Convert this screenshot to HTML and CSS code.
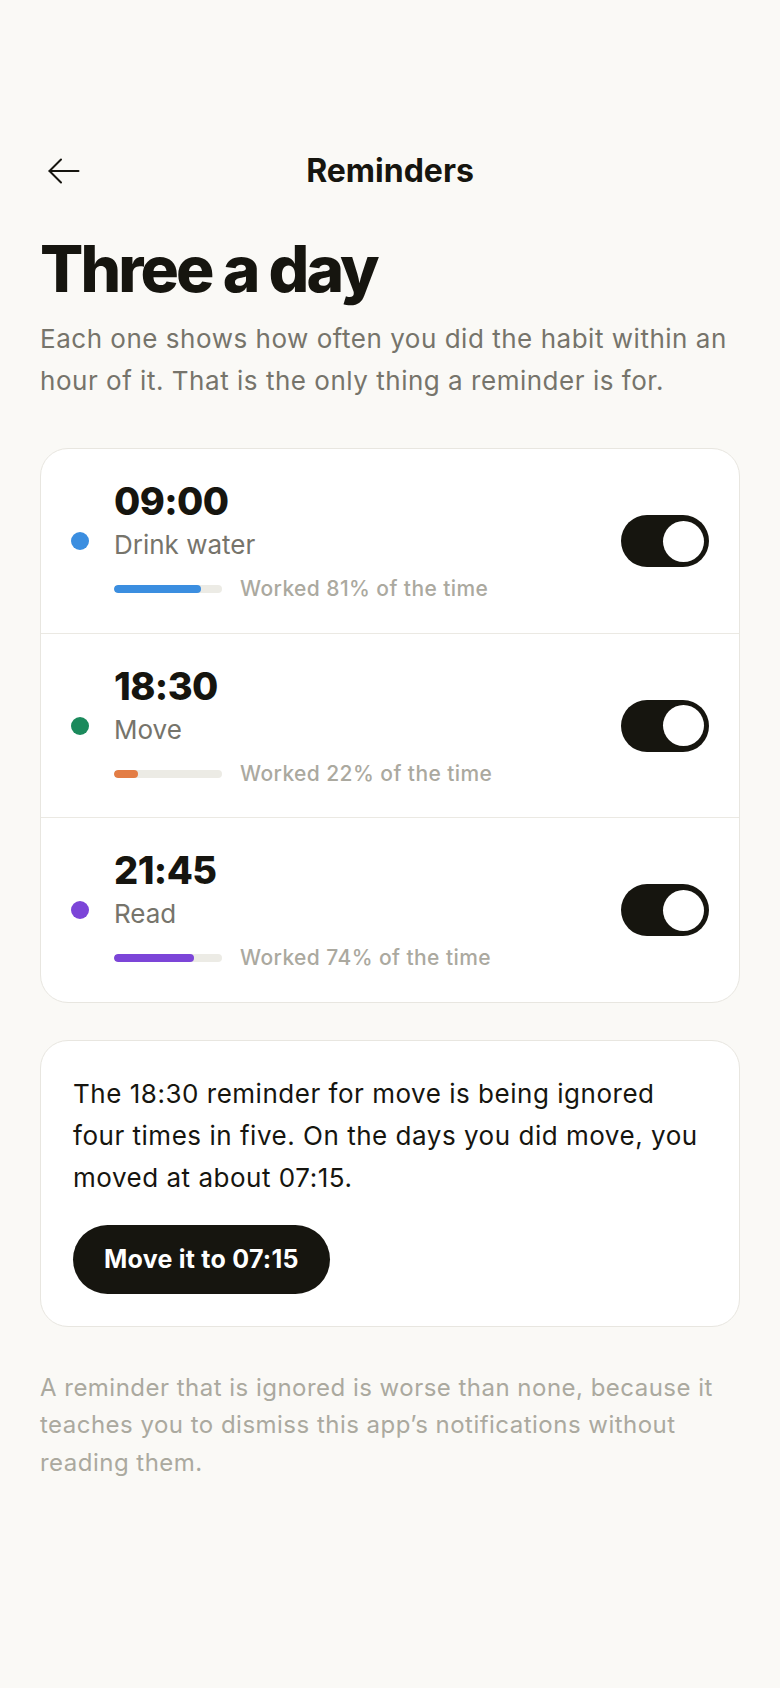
FILE: index.html
```html
<!DOCTYPE html>
<html lang="en">
<head>
<meta charset="utf-8">
<meta name="viewport" content="width=device-width, initial-scale=1">
<title>Reminders</title>
<link rel="stylesheet" href="styles.css">
</head>
<body>
<div class="screen">
  <header class="topbar">
    <button class="back" aria-label="Back">
      <svg width="32" height="26" viewBox="0 0 32 26" fill="none" stroke="currentColor" stroke-width="2" stroke-linecap="round" stroke-linejoin="round">
        <path d="M30.5 13H1.5"/>
        <path d="M13 1.5L1.5 13L13 24.5"/>
      </svg>
    </button>
    <h1 class="topbar-title">Reminders</h1>
    <span class="topbar-spacer"></span>
  </header>

  <h2 class="headline">Three a day</h2>
  <p class="lede">Each one shows how often you did the habit within an hour of it. That is the only thing a reminder is for.</p>

  <section class="card reminder-list">
    <div class="reminder">
      <span class="dot dot-blue"></span>
      <div class="reminder-body">
        <div class="time">09:00</div>
        <div class="habit">Drink water</div>
        <div class="stat">
          <span class="track"><span class="fill fill-blue" style="width:81%"></span></span>
          <span class="stat-text">Worked 81% of the time</span>
        </div>
      </div>
      <span class="toggle on"><span class="knob"></span></span>
    </div>
    <div class="reminder">
      <span class="dot dot-green"></span>
      <div class="reminder-body">
        <div class="time">18:30</div>
        <div class="habit">Move</div>
        <div class="stat">
          <span class="track"><span class="fill fill-orange" style="width:22%"></span></span>
          <span class="stat-text">Worked 22% of the time</span>
        </div>
      </div>
      <span class="toggle on"><span class="knob"></span></span>
    </div>
    <div class="reminder">
      <span class="dot dot-purple"></span>
      <div class="reminder-body">
        <div class="time">21:45</div>
        <div class="habit">Read</div>
        <div class="stat">
          <span class="track"><span class="fill fill-purple" style="width:74%"></span></span>
          <span class="stat-text">Worked 74% of the time</span>
        </div>
      </div>
      <span class="toggle on"><span class="knob"></span></span>
    </div>
  </section>

  <section class="card tip">
    <p class="tip-text">The 18:30 reminder for move is being ignored four times in five. On the days you did move, you moved at about 07:15.</p>
    <button class="tip-button">Move it to 07:15</button>
  </section>

  <p class="footnote">A reminder that is ignored is worse than none, because it teaches you to dismiss this app’s notifications without reading them.</p>
</div>
</body>
</html>
```
FILE: styles.css
```css
* { box-sizing: border-box; }

html, body {
  margin: 0;
  padding: 0;
  background: #faf9f6;
}

body {
  font-family: "Inter", "Noto Sans", "Liberation Sans", sans-serif;
  color: #16150f;
}

.screen {
  padding: 147px 40px 40px;
  display: flex;
  flex-direction: column;
}

.topbar {
  display: grid;
  grid-template-columns: 1fr auto 1fr;
  align-items: center;
  height: 48px;
}

.back {
  justify-self: start;
  width: 48px;
  height: 48px;
  padding: 0;
  border: 0;
  background: none;
  color: #16150f;
  display: flex;
  align-items: center;
  justify-content: center;
}

.back svg { display: block; }

.topbar-title {
  margin: 0;
  font-size: 32px;
  line-height: 48px;
  font-weight: 700;
  letter-spacing: 0;
}

.headline {
  margin: 39px 0 0;
  font-size: 64px;
  line-height: 70px;
  font-weight: 800;
  letter-spacing: -0.045em;
}

.lede {
  margin: 14px 0 0;
  font-size: 26px;
  line-height: 42px;
  color: #76746b;
  letter-spacing: 0.02em;
}

.card {
  background: #ffffff;
  border: 1px solid #e8e6e0;
  border-radius: 28px;
}

.reminder-list {
  margin-top: 46px;
  overflow: hidden;
}

.reminder {
  display: flex;
  align-items: center;
  padding: 30px 30px 29.5px;
}

.reminder + .reminder {
  border-top: 1px solid #ebe9e3;
}

.dot {
  width: 18px;
  height: 18px;
  border-radius: 50%;
  flex: none;
  margin-right: 25px;
}

.dot-blue { background: #3b8ee0; }
.dot-green { background: #1b8a5c; }
.dot-purple { background: #7c45d8; }

.reminder-body {
  flex: 1;
  min-width: 0;
}

.time {
  font-size: 38px;
  line-height: 44px;
  font-weight: 800;
  letter-spacing: -0.015em;
}

.habit {
  margin-top: 4px;
  font-size: 26px;
  line-height: 36px;
  color: #76746b;
}

.stat {
  margin-top: 12px;
  display: flex;
  align-items: center;
  gap: 18px;
  height: 28px;
}

.track {
  width: 108px;
  height: 8px;
  border-radius: 4px;
  background: #ecebe5;
  flex: none;
  overflow: hidden;
}

.fill {
  display: block;
  height: 100%;
  border-radius: 4px;
}

.fill-blue { background: #3b8ee0; }
.fill-orange { background: #e37d45; }
.fill-purple { background: #7c45d8; }

.stat-text {
  font-size: 21px;
  line-height: 28px;
  font-weight: 500;
  color: #aba99f;
  letter-spacing: 0.02em;
}

.toggle {
  flex: none;
  width: 88px;
  height: 52px;
  border-radius: 26px;
  background: #16150f;
  display: flex;
  align-items: center;
  justify-content: flex-end;
  padding: 0 5px;
}

.knob {
  width: 41px;
  height: 41px;
  border-radius: 50%;
  background: #ffffff;
}

.tip {
  margin-top: 37px;
  padding: 32px;
  display: flex;
  flex-direction: column;
  align-items: flex-start;
}

.tip-text {
  margin: 0;
  font-size: 26px;
  line-height: 42px;
  color: #16150f;
  letter-spacing: 0.02em;
}

.tip-button {
  margin-top: 26px;
  height: 69px;
  padding: 0 31px;
  border: 0;
  border-radius: 35px;
  background: #16150f;
  color: #ffffff;
  font-family: inherit;
  font-size: 25px;
  font-weight: 700;
  letter-spacing: 0.01em;
}

.footnote {
  margin: 42px 0 0;
  font-size: 24px;
  line-height: 37.5px;
  color: #aba99f;
  letter-spacing: 0.02em;
}
```
